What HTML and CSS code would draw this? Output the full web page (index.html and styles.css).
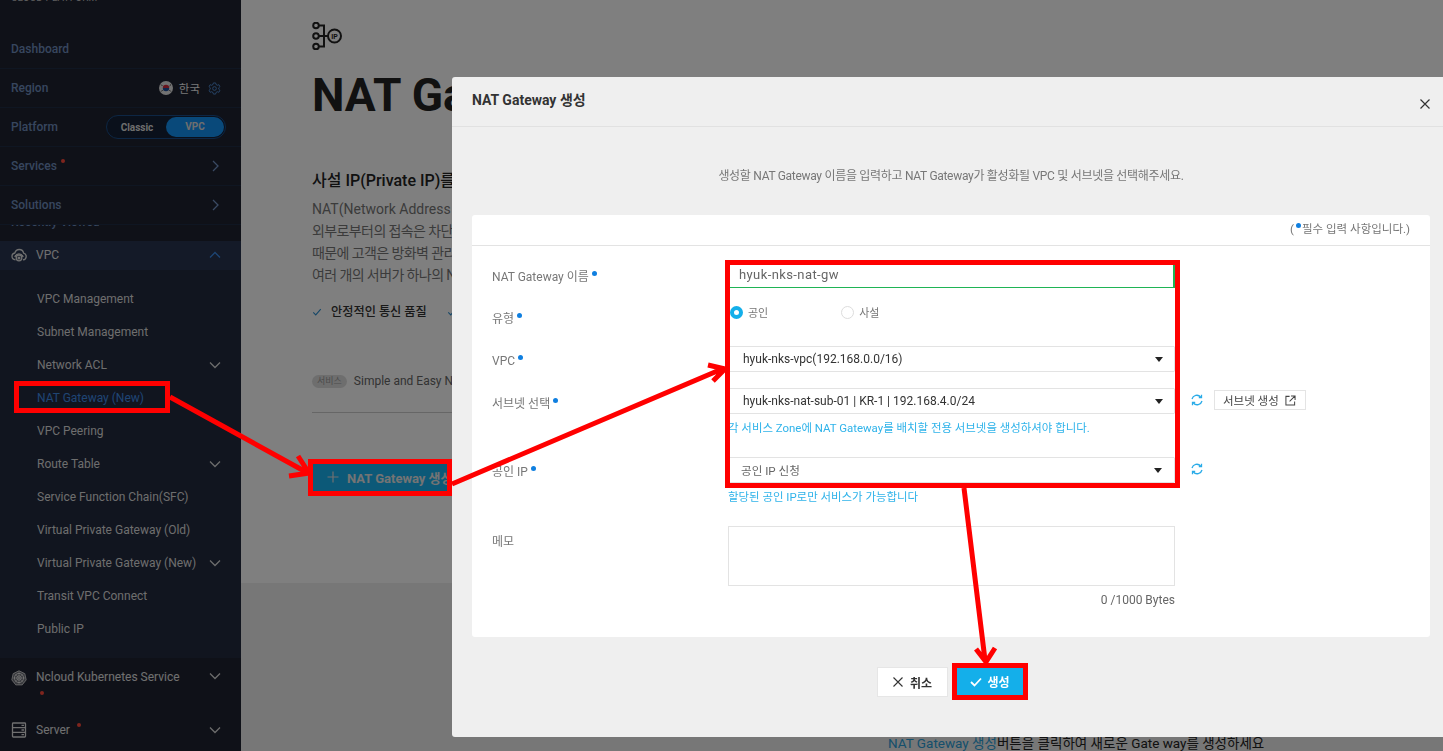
FILE: index.html
```html
<!DOCTYPE html>
<html lang="ko">
<head>
<meta charset="utf-8">
<title>NAT Gateway</title>
<link rel="stylesheet" href="styles.css">
</head>
<body>
<div class="page">
  <aside class="side">
    <div class="brand">CLOUD PLATFORM</div>
    <div class="top-row"><span class="top-label">Dashboard</span></div>
    <div class="top-row"><span class="top-label">Region</span>
      <span class="region">
        <svg class="flag" viewBox="0 0 14 14"><circle cx="7" cy="7" r="7" fill="#e4e4e4"/><path d="M3.800 7a3.200 3.200 0 0 1 6.400 0z" fill="#d0283a"/><path d="M3.800 7a3.200 3.200 0 0 0 6.400 0z" fill="#1d4f9c"/><path d="M2 3.500l1.400 1.400M2.200 10.500l1.400-1.400M12 3.500l-1.400 1.400M11.800 10.500l-1.400-1.400" stroke="#333" stroke-width="1"/></svg>
        <span class="region-name">한국</span>
        <svg class="gear" viewBox="0 0 14 14"><circle cx="7" cy="7" r="2" fill="none" stroke="currentColor"/><path d="M5.800 1h2.400l.4 1.700 1.500.8 1.600-.6 1.200 2.100-1.300 1.200v1.600l1.300 1.200-1.200 2.100-1.600-.6-1.500.8L8.200 13H5.800l-.4-1.700-1.500-.8-1.600.6-1.200-2.100 1.300-1.200V6.200L1.100 5l1.200-2.100 1.600.6 1.500-.8z" fill="none" stroke="currentColor"/></svg>
      </span>
    </div>
    <div class="top-row"><span class="top-label">Platform</span>
      <span class="toggle"><span class="tog-off">Classic</span><span class="tog-on">VPC</span></span>
    </div>
    <div class="top-row"><span class="top-label">Services<i class="dot-red dot-sup"></i></span>
      <svg class="chev chev-top" viewBox="0 0 12 12"><path d="M4 1l5 5-5 5"/></svg></div>
    <div class="top-row"><span class="top-label">Solutions</span>
      <svg class="chev chev-top" viewBox="0 0 12 12"><path d="M4 1l5 5-5 5"/></svg></div>
    <div class="recent"><span>Recently Viewed</span></div>

    <div class="group-open">
      <div class="group-head">
        <svg class="g-icon" viewBox="0 0 16 16" fill="none" stroke="currentColor" stroke-width="1.300"><path d="M4.500 12.800C2.500 12.600 1 11.200 1 9.300 1 7.600 2.200 6.300 3.800 6 4.500 3.800 6.100 2.500 8.200 2.500c2.300 0 4 1.500 4.400 3.600 1.500.4 2.600 1.700 2.600 3.300 0 1.800-1.400 3.200-3.200 3.400"/><path d="M3.800 10c.8-2 2.300-3 4.200-3s3.400 1 4.200 3"/><circle cx="8" cy="11" r="2.800"/><circle cx="8" cy="11" r=".9" fill="currentColor"/></svg>
        <span class="g-name">VPC</span>
        <svg class="chev up" viewBox="0 0 12 12"><path d="M1 8.500l5-5 5 5"/></svg>
      </div>
      <ul class="sub">
        <li>VPC Management</li>
        <li>Subnet Management</li>
        <li>Network ACL<svg class="chev" viewBox="0 0 12 12"><path d="M1 3.500l5 5 5-5"/></svg></li>
        <li class="active">NAT Gateway (New)</li>
        <li>VPC Peering</li>
        <li>Route Table<svg class="chev" viewBox="0 0 12 12"><path d="M1 3.500l5 5 5-5"/></svg></li>
        <li>Service Function Chain(SFC)</li>
        <li>Virtual Private Gateway (Old)</li>
        <li>Virtual Private Gateway (New)<svg class="chev" viewBox="0 0 12 12"><path d="M1 3.500l5 5 5-5"/></svg></li>
        <li>Transit VPC Connect</li>
        <li>Public IP</li>
      </ul>
    </div>
    <div class="group nks">
      <svg class="g-icon" viewBox="0 0 16 16" fill="none" stroke="currentColor"><path d="M8 .8l5.800 2.800 1.400 6.300-4 5H4.800l-4-5 1.400-6.300z" fill="currentColor" fill-opacity=".4" stroke-width=".8"/><circle cx="8" cy="8" r="4.600"/><circle cx="8" cy="8" r="2.200"/><path d="M8 1.500v13M1.500 8h13M3.500 3.500l9 9M12.500 3.500l-9 9" stroke-width=".5"/></svg>
      <span class="g-name">Ncloud Kubernetes Service<i class="dot-red dot-under"></i></span>
      <svg class="chev" viewBox="0 0 12 12"><path d="M1 3.500l5 5 5-5"/></svg>
    </div>
    <div class="group server">
      <svg class="g-icon" viewBox="0 0 16 16" fill="none" stroke="currentColor" stroke-width="1.300"><rect x="1.500" y="1" width="13" height="14" rx=".8"/><path d="M1.500 5.700h13M1.500 10.300h13M10.500 3.400h2.500M10.500 8h2.500M10.500 12.700h2.500"/></svg>
      <span class="g-name">Server<i class="dot-red dot-sup wide"></i></span>
      <svg class="chev" viewBox="0 0 12 12"><path d="M1 3.500l5 5 5-5"/></svg>
    </div>
  </aside>

  <main class="main">
    <section class="hero">
      <svg class="ip-icon" viewBox="0 0 30 28" fill="none" stroke="#222" stroke-width="2"><circle cx="4" cy="3.500" r="2.800"/><circle cx="4" cy="14" r="2.800"/><circle cx="4" cy="24.500" r="2.800"/><circle cx="22.500" cy="14" r="6.500"/><path d="M6.800 14H16M6.800 3.500H12V24.500H6.800"/><text x="22.500" y="16.500" class="ip-text">IP</text></svg>
      <h1 class="title">NAT Gateway</h1>
      <h2 class="lead">사설 IP(Private IP)를 공인 IP로 변환하는 NAT Gateway</h2>
      <p class="body-text">NAT(Network Address Translation) Gateway는 사설 IP를 공인 IP로 변환합니다.<br><span class="ko">외부로부터의 접속은 차단하면서 내부에서 외부로 통신할 수 있습니다.</span><br><span class="ko">때문에 고객은 방화벽 관리 부담을 줄이면서 안전하게 통신할 수 있습니다.</span><br><span class="ko">여러 개의 서버가 하나의 NAT Gateway를 공유할 수 있습니다.</span></p>
      <div class="checks">
        <span class="check"><svg class="chk" viewBox="0 0 12 12"><path d="M1.500 6.500l3 3 6-7"/></svg>안정적인 통신 품질</span>
        <span class="check"><svg class="chk" viewBox="0 0 12 12"><path d="M1.500 6.500l3 3 6-7"/></svg>간편한 설정</span>
      </div>
      <div class="service"><span class="chip">서비스</span>Simple and Easy NAT Gateway</div>
      <div class="cta"><svg class="plus" viewBox="0 0 12 12"><path d="M6 .5v11M.5 6h11"/></svg>NAT Gateway 생성</div>
    </section>
    <section class="lower">
      <p class="hint"><span class="hint-link">NAT Gateway 생성</span>버튼을 클릭하여 새로운 Gate way를 생성하세요</p>
    </section>
  </main>
</div>

<div class="dim"></div>

<div class="modal">
  <header class="m-head">
    <span class="m-title">NAT Gateway 생성</span>
    <svg class="m-close" viewBox="0 0 10 10"><path d="M.5.500l9 9M9.500.500l-9 9"/></svg>
  </header>
  <p class="m-desc">생성할 NAT Gateway 이름을 입력하고 NAT Gateway가 활성화될 VPC 및 서브넷을 선택해주세요.</p>
  <div class="card">
    <div class="req-note">(<i class="dot-blue"></i>필수 입력 사항입니다.)</div>
    <div class="form">
      <div class="row r-name">
        <label class="lbl">NAT Gateway 이름<i class="dot-blue"></i></label>
        <div class="ctl"><div class="input">hyuk-nks-nat-gw</div></div>
      </div>
      <div class="row r-type">
        <label class="lbl">유형<i class="dot-blue"></i></label>
        <div class="ctl radios">
          <span class="radio"><i class="rd on"></i>공인</span>
          <span class="radio second"><i class="rd"></i>사설</span>
        </div>
      </div>
      <div class="row r-vpc">
        <label class="lbl">VPC<i class="dot-blue"></i></label>
        <div class="ctl"><div class="select"><span>hyuk-nks-vpc(192.168.0.0/16)</span><i class="caret"></i></div></div>
      </div>
      <div class="row r-sub">
        <label class="lbl">서브넷 선택<i class="dot-blue"></i></label>
        <div class="ctl"><div class="select"><span>hyuk-nks-nat-sub-01 | KR-1 | 192.168.4.0/24</span><i class="caret"></i></div>
          <p class="help">각 서비스 Zone에 NAT Gateway를 배치할 전용 서브넷을 생성하셔야 합니다.</p></div>
        <div class="extras">
          <svg class="refresh" viewBox="0 0 12 12"><path d="M1 5a5 5 0 0 1 8.600-2M11 7a5 5 0 0 1-8.600 2"/><path d="M10.500.800v2.700H7.800M1.500 11.200V8.500h2.700"/></svg>
          <span class="sub-btn">서브넷 생성<svg class="ext" viewBox="0 0 12 12"><path d="M5 1.500H1v9.500h9.500V7M6.500 1H11v4.500M11 1L5 7"/></svg></span>
        </div>
      </div>
      <div class="row r-ip">
        <label class="lbl">공인 IP<i class="dot-blue"></i></label>
        <div class="ctl"><div class="select muted"><span>공인 IP 신청</span><i class="caret"></i></div>
          <p class="help">할당된 공인 IP로만 서비스가 가능합니다</p></div>
        <div class="extras">
          <svg class="refresh" viewBox="0 0 12 12"><path d="M1 5a5 5 0 0 1 8.600-2M11 7a5 5 0 0 1-8.600 2"/><path d="M10.500.800v2.700H7.800M1.500 11.200V8.500h2.700"/></svg>
        </div>
      </div>
      <div class="row r-memo">
        <label class="lbl">메모</label>
        <div class="ctl"><div class="textarea"></div><div class="count">0 /1000 Bytes</div></div>
      </div>
    </div>
  </div>
  <footer class="m-foot">
    <span class="btn cancel"><svg class="b-x" viewBox="0 0 10 10"><path d="M.5.500l9 9M9.500.500l-9 9"/></svg>취소</span>
    <span class="btn ok"><svg class="b-c" viewBox="0 0 12 10"><path d="M1 5l3.500 3.500L11 1.500"/></svg>생성</span>
  </footer>
</div>

<svg class="notes" viewBox="0 0 1443 751" fill="none" stroke="#ff0000" stroke-width="5">
  <rect x="16.500" y="383.500" width="151" height="27"/>
  <rect x="310.500" y="461.500" width="139" height="32"/>
  <rect x="727.500" y="262.500" width="450" height="223"/>
  <rect x="954.500" y="665.500" width="71" height="32"/>
  <path d="M170 397L306 472M298 456L309 473L289 476"/>
  <path d="M452 484L722 369M708 365L725 369L713 381"/>
  <path d="M964 488L985 660M976 649L986 662L995 648"/>
</svg>
</body>
</html>
```
FILE: styles.css
```css
* { box-sizing: border-box; }
html, body { margin: 0; height: 100%; overflow: hidden; }
body { font-family: Roboto, "Noto Sans CJK KR", sans-serif; background: #fff; color: #222; }
i { font-style: normal; display: inline-block; }

.page { display: flex; width: 1443px; height: 751px; overflow: hidden; }

/* sidebar */
.side { width: 241px; flex: none; height: 751px; background: #1e2230; overflow: hidden; font-size: 12px; color: #e0e0e0; }
.brand { height: 40px; margin-top: -9px; margin-bottom: -1px; padding: 0 11px; font-size: 10px; line-height: 14px; color: #bbb; letter-spacing: .1px; }
.top-row { position: relative; z-index: 1; display: flex; align-items: center; justify-content: space-between; height: 39px; padding: 0 20px 0 11px; border-bottom: 1px solid #1f2c45; background: #1e2230; }
.top-label { position: relative; font-weight: 500; color: #6f8dbd; }
.region { display: flex; align-items: center; gap: 6px; }
.flag { width: 14px; height: 14px; }
.region-name { color: #eee; font-size: 11.500px; }
.gear { width: 13px; height: 13px; color: #4f8bd4; margin-left: 2px; }
.toggle { display: flex; align-items: center; width: 120px; height: 24px; margin-right: -5px; border: 1px solid #1a4d88; border-radius: 12px; background: #152036; font-size: 10px; font-weight: 700; color: #ddd; padding: 1px; }
.tog-off { width: 58px; text-align: center; }
.tog-on { flex: 1; height: 20px; line-height: 20px; text-align: center; border-radius: 10px; background: #1392f5; }
.dot-red { width: 4px; height: 4px; border-radius: 50%; background: #ff4a3a; position: absolute; }
.dot-sup { top: 0; right: -8px; }
.dot-sup.wide { right: -11px; }
.dot-under { left: 4px; top: 21px; }
.chev { width: 12px; height: 12px; fill: none; stroke: #d8d8d8; stroke-width: 1.300; margin-left: auto; flex: none; }
.chev.chev-top { stroke: #7494c6; margin-left: 0; }
.chev.up { stroke: #3a8ae8; }

.recent { height: 26px; margin-top: -10px; padding: 0 11px; color: #6f8dbd; font-weight: 500; font-size: 12px; line-height: 14px; }
.recent span { display: block; }

.group-open { background: #222a3e; height: 417px; }
.group-head { display: flex; align-items: center; height: 29px; padding: 0 20px 1px 11px; background: #283450; }
.g-icon { width: 16px; height: 16px; flex: none; color: #e0e0e0; }
.g-name { position: relative; margin-left: 9px; color: #e0e0e0; }
.sub { list-style: none; margin: 12px 0 0; padding: 0; }
.sub li { display: flex; align-items: center; height: 33px; padding: 0 20px 0 37px; color: #dcdcdc; }
.sub li.active { color: #3f8ae6; }

.group { display: flex; align-items: center; padding: 0 20px 0 11px; background: #1e2230; }
.nks { height: 37px; align-items: flex-start; padding-top: 12px; }
.server { height: 56px; margin-top: 7px; }

/* main */
.main { flex: 1; min-width: 0; display: flex; flex-direction: column; }
.hero { height: 583px; padding: 22px 0 0 71px; background: #fff; overflow: hidden; }
.ip-icon { display: block; width: 30px; height: 28px; }
.ip-text { font: 700 7px Roboto, sans-serif; fill: #222; stroke: none; text-anchor: middle; }
.title { margin: 15px 0 0; font-size: 46px; line-height: 60px; font-weight: 700; color: #222; white-space: nowrap; }
.lead { margin: 45px 0 0; font-size: 16px; line-height: 22px; font-weight: 500; color: #222; white-space: nowrap; }
.body-text { margin: 6px 0 0; font-size: 14px; line-height: 22px; color: #777; white-space: nowrap; }
.ko { letter-spacing: -.6px; }
.checks { display: flex; gap: 20px; margin-top: 16px; font-size: 12.200px; font-weight: 500; color: #333; line-height: 20px; }
.check { display: flex; align-items: center; gap: 9px; }
.chk { width: 10px; height: 10px; fill: none; stroke: #2d8fd0; stroke-width: 1.300; }
.service { display: flex; align-items: center; margin-top: 49px; font-size: 12px; color: #666; line-height: 20px; border-bottom: 1px solid #ccc; padding-bottom: 21px; white-space: nowrap; }
.chip { padding: 0 5px; height: 13px; line-height: 13px; border-radius: 7px; background: #ddd; font-size: 9px; color: #999; margin-right: 7px; }
.cta { display: flex; align-items: center; width: 300px; height: 28px; margin-top: 50px; padding-left: 15px; background: #19b2f0; color: #e8e8e8; font-size: 13px; font-weight: 700; white-space: nowrap; }
.plus { width: 12px; height: 12px; fill: none; stroke: #e0e0e0; stroke-width: 1.200; margin-right: 8px; }
.lower { flex: 1; background: #eee; position: relative; }
.hint { margin: 152px 0 0 647px; font-size: 13.500px; line-height: 16px; color: #222; white-space: nowrap; }
.hint-link { color: #2a9fd8; }

.dim { position: fixed; inset: 0; z-index: 10; background: rgba(0,0,0,.5); }

/* modal */
.modal { position: fixed; z-index: 11; left: 452px; top: 77px; width: 991px; height: 660px; background: #efefef; border-radius: 3px 0 0 3px; display: flex; flex-direction: column; font-size: 12px; color: #666; }
.m-head { display: flex; align-items: center; justify-content: space-between; height: 50px; padding: 0 13px 5px 20px; border-bottom: 1px solid #e1e1e1; flex: none; }
.m-title { font-size: 14px; font-weight: 700; color: #333; }
.m-close { width: 10px; height: 10px; margin-top: 10px; fill: none; stroke: #333; stroke-width: 1.200; }
.m-desc { margin: 41px 0 0; width: 998px; text-align: center; font-size: 12px; letter-spacing: -.3px; line-height: 16px; color: #777; }
.card { margin: 31px 13px 0 20px; height: 422px; background: #fff; border-radius: 3px; flex: none; }
.req-note { height: 31px; line-height: 29px; padding-right: 20px; text-align: right; border-bottom: 1px solid #e3e3e3; font-size: 11.500px; color: #777; }
.dot-blue { width: 5px; height: 5px; border-radius: 50%; background: #0f7fe0; margin: 0 1px 0 2px; vertical-align: 5px; }
.form { padding: 17px 0 0 20px; }
.row { display: flex; align-items: flex-start; }
.lbl { width: 236px; flex: none; font-size: 12px; line-height: 16px; color: #777; }
.lbl .dot-blue { margin-left: 3px; }
.ctl { width: 447px; flex: none; }
.r-name { height: 37px; }
.r-name .lbl { padding-top: 6px; }
.input { height: 25px; padding: 0 11px; line-height: 24px; font-size: 13px; letter-spacing: .4px; color: #666; border-bottom: 1px solid #1fb455; border-right: 2px solid #1fb455; }
.r-type { height: 46px; }
.r-type .lbl { padding-top: 11px; }
.radios { display: flex; align-items: center; height: 24px; }
.radio { display: flex; align-items: center; color: #777; font-size: 11px; }
.radio.second { margin-left: 71px; }
.rd { width: 13px; height: 13px; border-radius: 50%; border: 1px solid #ddd; background: #fff; margin: 0 5px 0 2px; }
.rd.on { border: 4px solid #14afea; }
.r-vpc { height: 42px; }
.r-vpc .lbl { padding-top: 7px; }
.select { display: flex; align-items: center; justify-content: space-between; height: 26px; padding: 0 11px 0 14px; border: 1px solid #e3e3e3; border-radius: 1px; font-size: 12px; color: #333; white-space: nowrap; }
.select.muted { color: #666; font-size: 11.600px; padding-left: 12px; padding-right: 12px; }
.caret { width: 0; height: 0; border-style: solid; border-width: 5px 4px 0; border-color: #222 transparent transparent; }
.r-sub { height: 69px; }
.r-sub .lbl { padding-top: 8px; }
.help { margin: 7px 0 0; font-size: 11.450px; line-height: 15px; color: #2fb3ea; white-space: nowrap; }
.extras { display: flex; align-items: center; height: 26px; margin: -1px 0 0 16px; gap: 11px; }
.refresh { width: 12px; height: 12px; fill: none; stroke: #29abe8; stroke-width: 1.300; }
.sub-btn { display: flex; align-items: center; justify-content: space-between; width: 92px; height: 20px; padding: 0 9px 0 8px; border: 1px solid #e4e4e4; font-size: 11.500px; color: #444; }
.ext { width: 11px; height: 11px; fill: none; stroke: #444; stroke-width: 1.100; }
.r-ip { height: 69px; }
.r-ip .lbl { padding-top: 7px; }
.textarea { height: 60px; border: 1px solid #e3e3e3; }
.count { margin-top: 7px; text-align: right; font-size: 12px; line-height: 15px; color: #666; }
.r-memo .lbl { padding-top: 8px; }

.m-foot { display: flex; gap: 9px; margin: 30px 0 0 425px; }
.btn { display: flex; align-items: center; justify-content: center; font-size: 12px; font-weight: 700; }
.cancel { width: 71px; height: 30px; background: #fff; border: 1px solid #e6e6e6; color: #333; }
.ok { width: 66px; height: 27px; margin-top: 1px; background: #14afea; color: #fff; }
.b-x { width: 10px; height: 10px; fill: none; stroke: #333; stroke-width: 1.100; margin-right: 7px; }
.b-c { width: 12px; height: 10px; fill: none; stroke: #fff; stroke-width: 1.800; margin-right: 5px; }

/* annotations */
.notes { position: fixed; z-index: 12; left: 0; top: 0; width: 1443px; height: 751px; pointer-events: none; }
```
